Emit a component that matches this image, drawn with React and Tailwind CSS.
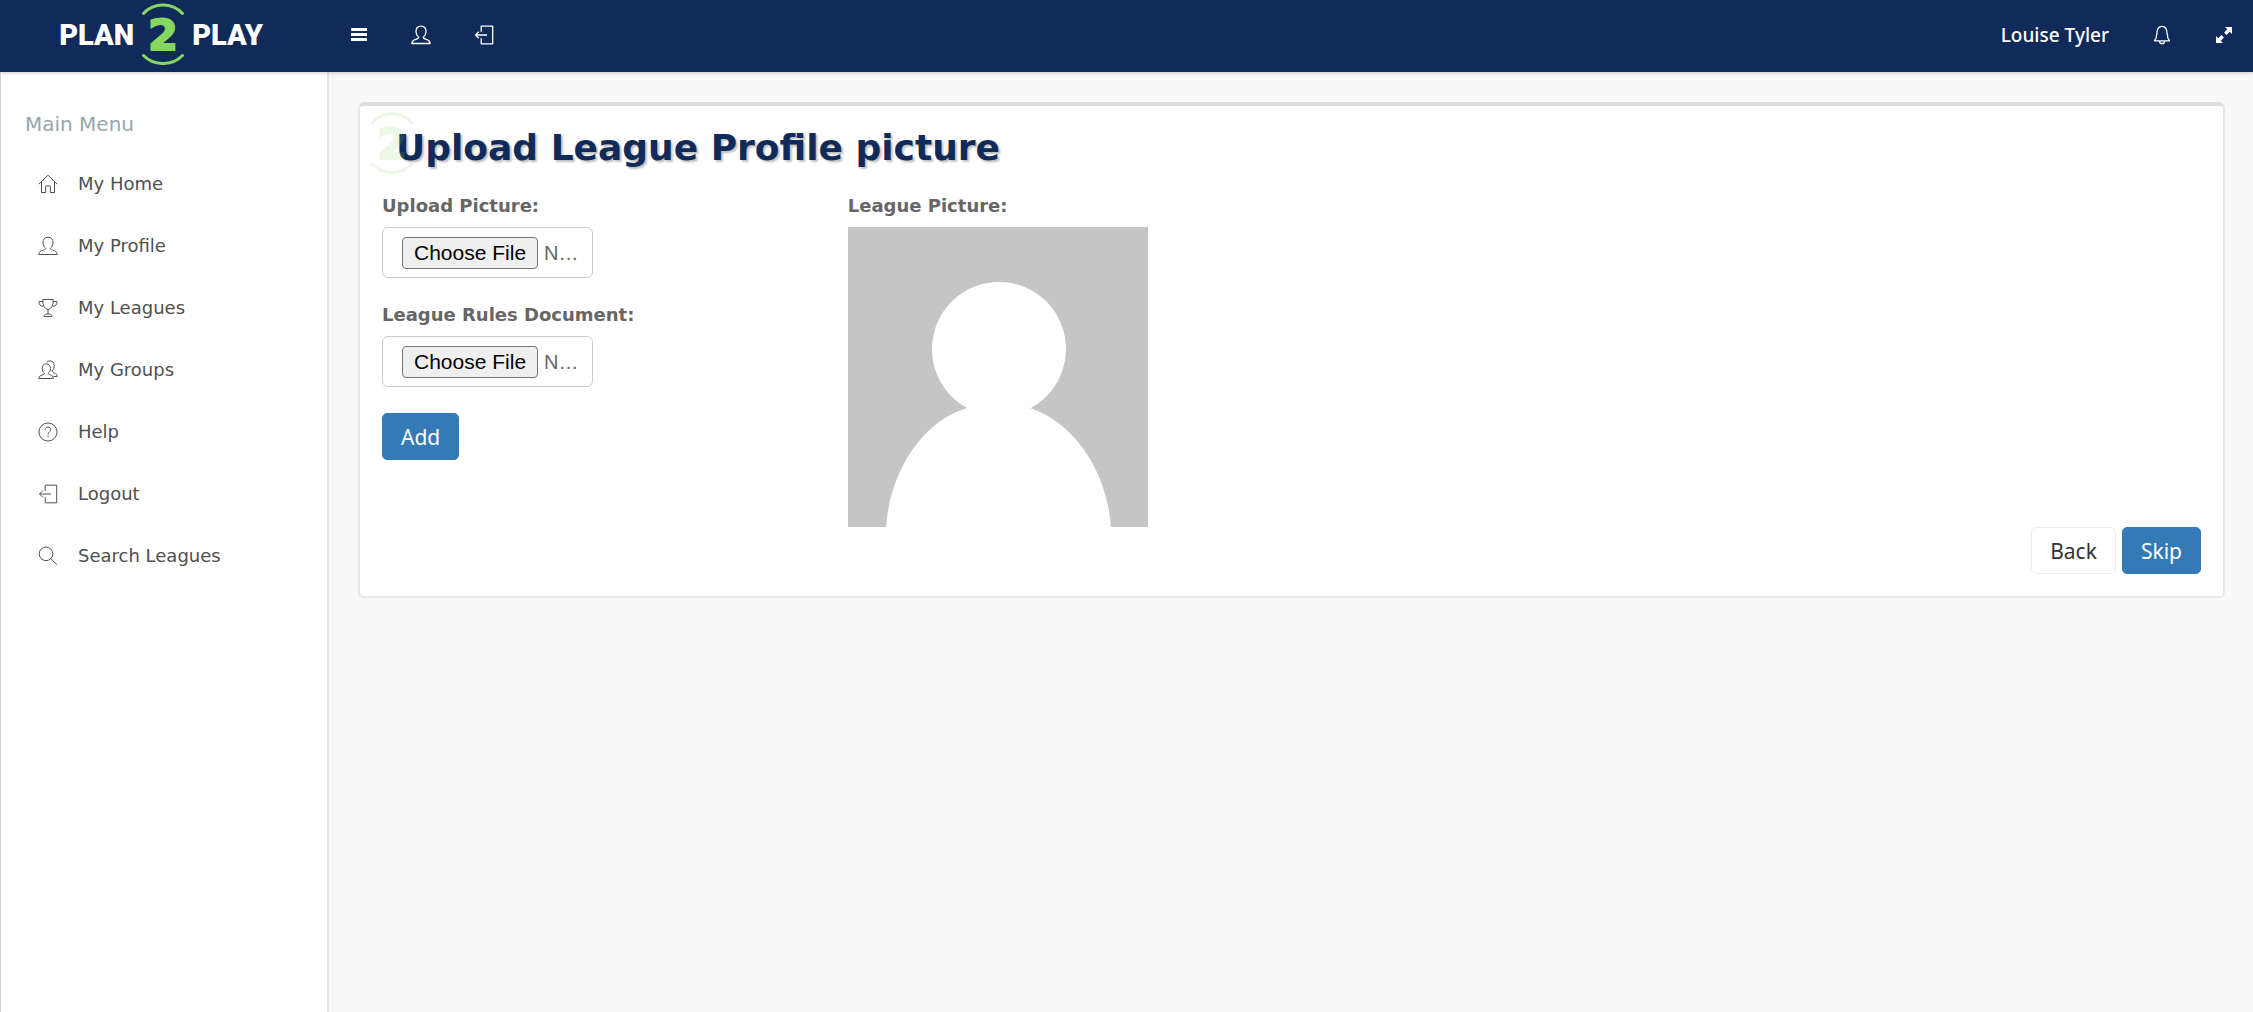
import React from "react";

function Icon({ children, className = "", strokeWidth = 1 }) {
  return (
    <svg
      viewBox="0 0 20 20"
      className={`size-5 shrink-0 ${className}`}
      fill="none"
      stroke="currentColor"
      strokeWidth={strokeWidth}
      strokeLinejoin="round"
      aria-hidden="true"
    >
      {children}
    </svg>
  );
}

const HomeGlyph = () => (
  <>
    <path d="M.8 10.2 10 1.2l9.200 9" />
    <path d="M3.500 8v10.500h4.200v-6.500h4.600v6.500h4.200V8" />
  </>
);

const UserGlyph = () => (
  <path d="M7.700 12.300C6 11 5.200 9.200 5 7 4.700 3.500 6.600 1.200 10 1.200S15.300 3.500 15 7c-.2 2.200-1 4-2.700 5.300.3 1.200 1.300 1.500 2.900 2 2.200.7 3.700 1.300 4 4.200H.8c.3-2.900 1.800-3.500 4-4.200 1.600-.5 2.600-.8 2.900-2Z" />
);

const CupGlyph = () => (
  <>
    <path d="M4.800 1.500h10.400c.2 5.500-1.700 9.500-5.200 10-3.500-.5-5.400-4.500-5.200-10Z" />
    <path d="M4.800 3.500H1c0 3.300 1.200 4.600 4.500 4.700M15.200 3.500H19c0 3.300-1.200 4.600-4.500 4.700M10 11.500v4.500M6 18.500c0-1.500 1-2.200 2.500-2.300h3c1.500.1 2.500.8 2.500 2.300Z" />
  </>
);

const GroupGlyph = () => (
  <>
    <path d="M6.500 13.300C4.800 12 4.200 10.500 4.200 8.500c0-3 1.600-4.700 4.100-4.700s4.200 1.700 4.200 4.700c0 2-.7 3.500-2.300 4.800.2 1 1 1.200 2.300 1.700 1.700.6 2.600 1.200 2.900 3.500H.8c.3-2.300 1.500-2.900 3.200-3.500 1.400-.5 2.300-.7 2.500-1.700Z" />
    <path d="M9 2.200C9.800 1.300 10.800.9 12 .9c2.600 0 4.300 1.900 4.200 4.800 0 2.200-.8 4-2.200 5.200.3 1.300 1 1.600 2.500 2.200 1.700.6 2.500 1.200 2.700 3.400h-3.500" />
  </>
);

const HelpGlyph = () => (
  <>
    <circle cx="10" cy="10" r="9" />
    <path d="M7.200 7.800c0-1.700 1.100-2.700 2.800-2.700s2.800 1 2.800 2.500c0 2.200-2.800 2.200-2.800 4.700M10 13.600v1.500" />
  </>
);

const ExitGlyph = () => (
  <>
    <path d="M7.200 6.800V1.200h11.500v17.600H7.200v-5.500" />
    <path d="M13 10H1.500M4.800 6.700 1.500 10l3.300 3.300" />
  </>
);

const SearchGlyph = () => (
  <>
    <circle cx="8" cy="7.800" r="6.800" />
    <path d="m12.800 12.600 6.200 6.200" />
  </>
);

function Emblem({ className = "" }) {
  return (
    <svg viewBox="0 0 42 62" className={`h-[62px] w-[42px] shrink-0 ${className}`} aria-hidden="true">
      <path
        d="M1.500 10.500C12-.8 30-.8 40.500 10.500M1.500 52.500c10.500 10.700 28.500 10.700 39 0"
        fill="none"
        stroke="#86d65f"
        strokeWidth="3"
        strokeLinecap="round"
      />
      <text
        x="21"
        y="47"
        textAnchor="middle"
        fill="#86d65f"
        stroke="#86d65f"
        strokeWidth="2"
        fontFamily="'DejaVu Sans', sans-serif"
        fontWeight="700"
        fontSize="43"
      >
        2
      </text>
    </svg>
  );
}

const menu = [
  { label: "My Home", Glyph: HomeGlyph },
  { label: "My Profile", Glyph: UserGlyph },
  { label: "My Leagues", Glyph: CupGlyph },
  { label: "My Groups", Glyph: GroupGlyph },
  { label: "Help", Glyph: HelpGlyph },
  { label: "Logout", Glyph: ExitGlyph },
  { label: "Search Leagues", Glyph: SearchGlyph },
];

function FileField({ id, label }) {
  return (
    <div>
      <label htmlFor={id} className="block text-[18px] leading-7 font-bold text-[#666]">
        {label}
      </label>
      <input
        id={id}
        type="file"
        className="mt-[7px] block h-[51px] w-[211px] rounded-md border border-[#ccc] bg-white px-[19px] py-[9px] font-['Liberation_Sans',Arial,sans-serif] text-[20px] leading-6 text-[#666] file:mr-[6px] file:h-8 file:rounded-[4px] file:border file:border-solid file:border-[#767676] file:bg-[#efefef] file:px-[11px] file:text-[21px] file:leading-6 file:text-black"
      />
    </div>
  );
}

const buttonBase =
  "h-[47px] rounded-[5px] border px-[18px] font-['Noto_Sans','Open_Sans',sans-serif] text-[21px] leading-7";

export default function App() {
  return (
    <div className="flex min-h-screen flex-col bg-[#f8f8f8] font-['DejaVu_Sans',Verdana,sans-serif]">
      <header className="relative z-10 flex h-[72px] items-center bg-[#102b5a] pr-5 pb-0.5 text-white shadow-[0_1px_4px_rgba(0,0,0,0.2)]">
        <a
          href="#home"
          className="flex w-[322px] items-center justify-center gap-2 font-['Roboto',sans-serif] text-[29px] leading-8 font-black"
        >
          <span>PLAN</span>
          <Emblem className="-mt-0.5" />
          <span>PLAY</span>
        </a>
        <nav aria-label="Toolbar" className="ml-7 flex items-center gap-[43px]">
          <button type="button" aria-label="Toggle menu">
            <svg viewBox="0 0 18 20" className="h-5 w-[18px]" aria-hidden="true">
              <path d="M1 4.500h16M1 9.500h16M1 14.500h16" stroke="currentColor" strokeWidth="3" />
            </svg>
          </button>
          <button type="button" aria-label="Profile">
            <Icon strokeWidth={1.3}>
              <UserGlyph />
            </Icon>
          </button>
          <button type="button" aria-label="Log out">
            <Icon strokeWidth={1.3}>
              <ExitGlyph />
            </Icon>
          </button>
        </nav>
        <div className="ml-auto flex items-center gap-[43px]">
          <a href="#account" className="font-['Noto_Sans','Open_Sans',sans-serif] text-[19px] leading-6 font-medium">
            Louise Tyler
          </a>
          <button type="button" aria-label="Notifications">
            <Icon strokeWidth={1.3}>
              <path d="M2.500 15.800C4.300 14 4.700 12 4.800 9 4.900 4.500 6.500 1.300 10 1.300S15.100 4.500 15.200 9c.1 3 .5 5 2.300 6.800ZM7.500 16c0 1.700 1 2.700 2.500 2.700s2.500-1 2.500-2.700" />
            </Icon>
          </button>
          <button type="button" aria-label="Full screen">
            <svg viewBox="0 0 18 18" className="size-[18px]" aria-hidden="true">
              <path
                d="M10 1h7v7l-2.300-2.300-3.200 3.200-2.400-2.400 3.200-3.200ZM1 10l2.300 2.300 3.200-3.200 2.400 2.400-3.200 3.200L8 17H1Z"
                fill="currentColor"
              />
            </svg>
          </button>
        </div>
      </header>

      <div className="flex grow">
        <aside className="w-[329px] shrink-0 border-r-2 border-l border-r-[#e6e6e6] border-l-[#d5d5d5] bg-white pt-9">
          <h2 className="pl-6 text-[20px] leading-8 text-[#98a6ad]">Main Menu</h2>
          <nav aria-label="Main menu" className="mt-[13px] flex flex-col">
            {menu.map(({ label, Glyph }) => (
              <a
                key={label}
                href={`#${label.toLowerCase().replace(" ", "-")}`}
                className="flex h-[62px] items-center gap-5 pl-[37px] text-[18px] leading-6 text-[#505050]"
              >
                <Icon>
                  <Glyph />
                </Icon>
                {label}
              </a>
            ))}
          </nav>
        </aside>

        <main className="grow px-7 pt-[30px] pl-[29px]">
          <section className="relative rounded-md border-2 border-t-4 border-[#e8e8e8] border-t-[#ddd] bg-white px-[22px] pb-[22px]">
            <h1 className="pt-[17px] pl-[14px] text-[36px] leading-[50px] font-bold text-[#102b5a] [text-shadow:2px_2px_2px_rgba(0,0,0,0.25)]">
              Upload League Profile picture
            </h1>
            <Emblem className="pointer-events-none absolute top-[6px] left-[11px] opacity-15" />
            <form className="mt-[19px]" onSubmit={(e) => e.preventDefault()}>
              <div className="grid grid-cols-4 gap-11">
                <div className="flex flex-col items-start">
                  <div className="flex flex-col gap-[23px]">
                    <FileField id="league-picture" label="Upload Picture:" />
                    <FileField id="league-rules" label="League Rules Document:" />
                  </div>
                  <button type="submit" className={`${buttonBase} mt-[26px] border-[#337ab7] bg-[#337ab7] text-white`}>
                    Add
                  </button>
                </div>
                <figure>
                  <figcaption className="text-[18px] leading-7 font-bold text-[#666]">League Picture:</figcaption>
                  <svg viewBox="0 0 300 300" className="mt-[7px] size-[300px]" role="img" aria-label="Placeholder avatar">
                    <rect width="300" height="300" fill="#c5c5c5" />
                    <circle cx="151" cy="122" r="67" fill="#fff" />
                    <path d="M38 300C42 243 76 193 119 181L151 170l31 11c43 14 77 62 81 119Z" fill="#fff" />
                  </svg>
                </figure>
              </div>
              <div className="flex justify-end gap-[6px]">
                <button type="button" className={`${buttonBase} border-[#eee] bg-white text-[#333]`}>
                  Back
                </button>
                <button type="button" className={`${buttonBase} border-[#337ab7] bg-[#337ab7] text-white`}>
                  Skip
                </button>
              </div>
            </form>
          </section>
        </main>
      </div>
    </div>
  );
}
